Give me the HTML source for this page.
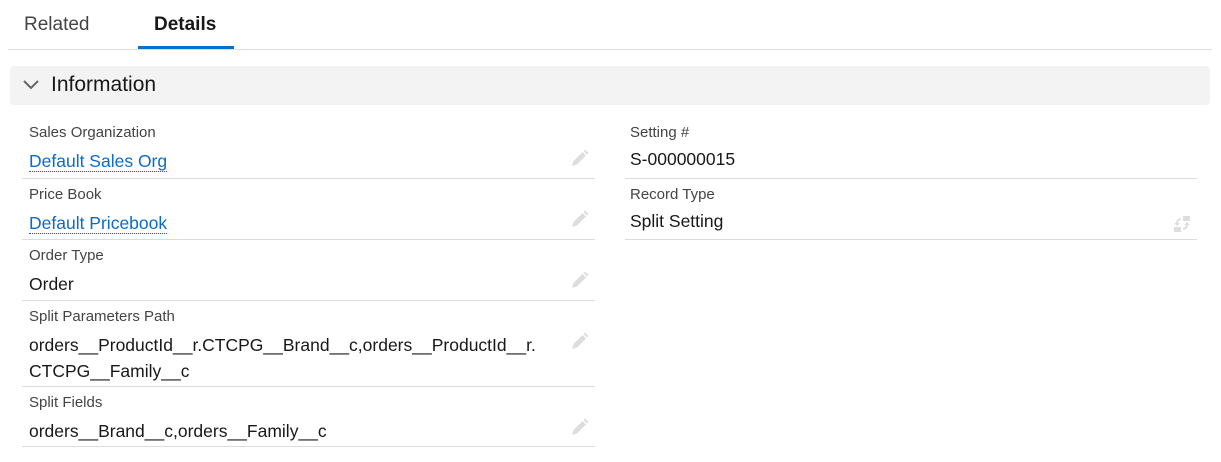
<!DOCTYPE html>
<html><head><style>
*{margin:0;padding:0;box-sizing:border-box}
body{width:1221px;height:462px;background:#fff;font-family:"Liberation Sans",sans-serif;color:#181818;position:relative;overflow:hidden}
.a{position:absolute}
.tab{font-size:19px;top:14px}
.lbl{font-size:15px;color:#444}
.val{font-size:17.5px;color:#181818;line-height:26px}
.lnk{color:#0b6bcb;border-bottom:1px dotted #0b6bcb;padding-bottom:0}
.hr{height:1px;background:#dcdcdc}
.pen{width:20px;height:20px}
</style></head><body>
<div class="a tab" style="left:24px;color:#444">Related</div>
<div class="a tab" style="left:154px;font-weight:bold;color:#181818">Details</div>
<div class="a" style="left:138px;top:46px;width:96px;height:3px;background:#0070d2"></div>
<div class="a hr" style="left:8px;top:49px;width:1204px"></div>
<div class="a" style="left:10px;top:66px;width:1200px;height:39px;background:#f3f3f3;border-radius:4px"></div>
<svg class="a" style="left:22px;top:79px" width="18" height="12" viewBox="0 0 18 12"><path d="M2 2l7 7 7-7" stroke="#666" stroke-width="2" fill="none"/></svg>
<div class="a" style="left:51px;top:73px;font-size:21px;color:#181818">Information</div>

<div class="a lbl" style="left:29px;top:124px">Sales Organization</div>
<div class="a val" style="left:29px;top:148px"><span class="lnk">Default Sales Org</span></div>
<div class="a hr" style="left:22px;top:178px;width:573px"></div>
<div class="a lbl" style="left:29px;top:186px">Price Book</div>
<div class="a val" style="left:29px;top:210px"><span class="lnk">Default Pricebook</span></div>
<div class="a hr" style="left:22px;top:239px;width:573px"></div>
<div class="a lbl" style="left:29px;top:247px">Order Type</div>
<div class="a val" style="left:29px;top:271px">Order</div>
<div class="a hr" style="left:22px;top:300px;width:573px"></div>
<div class="a lbl" style="left:29px;top:308px">Split Parameters Path</div>
<div class="a val" style="left:29px;top:332px;width:560px;white-space:nowrap">orders__ProductId__r.CTCPG__Brand__c,orders__ProductId__r.<br>CTCPG__Family__c</div>
<div class="a hr" style="left:22px;top:386px;width:573px"></div>
<div class="a lbl" style="left:29px;top:394px">Split Fields</div>
<div class="a val" style="left:29px;top:418px">orders__Brand__c,orders__Family__c</div>
<div class="a hr" style="left:22px;top:446px;width:573px"></div>

<div class="a lbl" style="left:630px;top:124px">Setting #</div>
<div class="a val" style="left:630px;top:146px">S-000000015</div>
<div class="a hr" style="left:625px;top:178px;width:572px"></div>
<div class="a lbl" style="left:630px;top:186px">Record Type</div>
<div class="a val" style="left:630px;top:208px">Split Setting</div>
<div class="a hr" style="left:625px;top:239px;width:572px"></div>
<svg class="a" style="left:1172px;top:214px" width="20" height="20" viewBox="0 0 20 20" fill="#ddd"><rect x="11" y="2" width="7" height="5"/><rect x="2" y="13" width="7" height="5"/><path d="M9 4a5 5 0 0 0-5 5h-2l3 3 3-3h-2a3 3 0 0 1 3-3z"/><path d="M11 16a5 5 0 0 0 5-5h2l-3-3-3 3h2a3 3 0 0 1-3 3z"/></svg>

<svg class="a pen" style="left:570px;top:148px" viewBox="0 0 20 20"><path d="M2 18l1.5-5 9-9 3.5 3.5-9 9z M13.5 3l1.5-1.5 3.5 3.5-1.5 1.5z" fill="#ddd"/></svg>
<svg class="a pen" style="left:570px;top:209px" viewBox="0 0 20 20"><path d="M2 18l1.5-5 9-9 3.5 3.5-9 9z M13.5 3l1.5-1.5 3.5 3.5-1.5 1.5z" fill="#ddd"/></svg>
<svg class="a pen" style="left:570px;top:270px" viewBox="0 0 20 20"><path d="M2 18l1.5-5 9-9 3.5 3.5-9 9z M13.5 3l1.5-1.5 3.5 3.5-1.5 1.5z" fill="#ddd"/></svg>
<svg class="a pen" style="left:570px;top:331px" viewBox="0 0 20 20"><path d="M2 18l1.5-5 9-9 3.5 3.5-9 9z M13.5 3l1.5-1.5 3.5 3.5-1.5 1.5z" fill="#ddd"/></svg>
<svg class="a pen" style="left:570px;top:417px" viewBox="0 0 20 20"><path d="M2 18l1.5-5 9-9 3.5 3.5-9 9z M13.5 3l1.5-1.5 3.5 3.5-1.5 1.5z" fill="#ddd"/></svg>
</body></html>
